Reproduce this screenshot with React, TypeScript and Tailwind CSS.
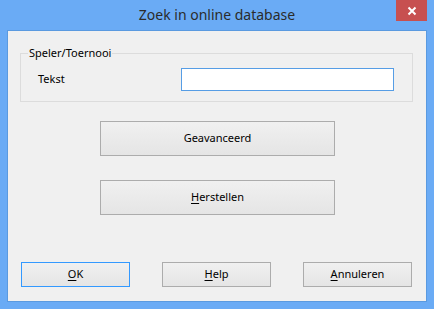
import React from "react";

const font = { fontFamily: '"Segoe UI", "Noto Sans", "Open Sans", sans-serif' };

function Btn({
  children,
  w,
  h,
  focused,
}: {
  children: React.ReactNode;
  w: string;
  h: string;
  focused?: boolean;
}) {
  return (
    <div
      className={`${w} ${h} flex items-center justify-center border bg-gradient-to-b from-[#f0f0f0] to-[#e5e5e5] text-[11px] text-black ${
        focused ? "border-[#3399ff]" : "border-[#acacac]"
      }`}
    >
      {children}
    </div>
  );
}

export default function App() {
  return (
    <div
      className="w-[434px] h-[309px] bg-[#6aabf5] flex flex-col"
      style={font}
    >
      <div className="relative h-[30px] flex items-center justify-center">
        <span className="text-[14px] text-[#2b2b2b] leading-none">
          Zoek in online database
        </span>
        <div className="absolute top-0 right-[7px] w-[31px] h-[21px] bg-[#c75050] flex items-center justify-center">
          <svg width="10" height="10" viewBox="0 0 10 10">
            <path d="M1.5 1.5 L8.5 8.5 M8.5 1.5 L1.5 8.5" stroke="white" strokeWidth="2" />
          </svg>
        </div>
      </div>
      <div className="mx-[7px] h-[272px] border border-[#5a9ae0] bg-[#f0f0f0] flex flex-col pt-[22px] pl-[12px]">
        <div className="relative w-[393px] h-[49px] border border-[#dcdcdc]">
          <span className="absolute left-[7px] -top-[9px] px-[1px] bg-[#f0f0f0] text-[11px] leading-[16px] text-black">
            Speler/Toernooi
          </span>
          <div className="flex items-center pt-[14px] pl-[17px]">
            <span className="w-[143px] text-[11px] text-black">Tekst</span>
            <div className="w-[213px] h-[23px] border border-[#569de5] bg-white" />
          </div>
        </div>
        <div className="flex flex-col items-start pl-[80px] mt-[19px] gap-[24px]">
          <Btn w="w-[235px]" h="h-[35px]">
            Geavanceerd
          </Btn>
          <Btn w="w-[235px]" h="h-[35px]">
            <span>
              <span className="underline underline-offset-2">H</span>erstellen
            </span>
          </Btn>
        </div>
        <div className="flex gap-[32px] mt-[47px] pl-[1px]">
          <Btn w="w-[109px]" h="h-[25px]" focused>
            <span>
              <span className="underline underline-offset-2">O</span>K
            </span>
          </Btn>
          <Btn w="w-[109px]" h="h-[25px]">
            <span>
              <span className="underline underline-offset-2">H</span>elp
            </span>
          </Btn>
          <Btn w="w-[109px]" h="h-[25px]">
            <span>
              <span className="underline underline-offset-2">A</span>nnuleren
            </span>
          </Btn>
        </div>
      </div>
    </div>
  );
}
